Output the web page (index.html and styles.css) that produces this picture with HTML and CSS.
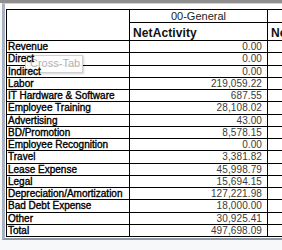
FILE: index.html
```html
<!DOCTYPE html>
<html>
<head>
<meta charset="utf-8">
<link rel="stylesheet" href="styles.css">
</head>
<body>
<div class="frame">
  <div class="inner">
    <div class="sheet">
      <div class="cell corner"></div>
      <div class="cell group">00-General</div>
      <div class="cell group"></div>
      <div class="cell measure">NetActivity</div>
      <div class="cell measure">NetActivity</div>

      <div class="cell label"><span>Revenue</span></div><div class="cell num">0.00</div><div class="cell"></div>
      <div class="cell label"><span>Direct</span></div><div class="cell num">0.00</div><div class="cell"></div>
      <div class="cell label"><span>Indirect</span></div><div class="cell num">0.00</div><div class="cell"></div>
      <div class="cell label"><span>Labor</span></div><div class="cell num">219,059.22</div><div class="cell"></div>
      <div class="cell label"><span>IT Hardware &amp; Software</span></div><div class="cell num">687.55</div><div class="cell"></div>
      <div class="cell label"><span>Employee Training</span></div><div class="cell num">28,108.02</div><div class="cell"></div>
      <div class="cell label"><span>Advertising</span></div><div class="cell num">43.00</div><div class="cell"></div>
      <div class="cell label"><span>BD/Promotion</span></div><div class="cell num">8,578.15</div><div class="cell"></div>
      <div class="cell label"><span>Employee Recognition</span></div><div class="cell num">0.00</div><div class="cell"></div>
      <div class="cell label"><span>Travel</span></div><div class="cell num">3,381.82</div><div class="cell"></div>
      <div class="cell label"><span>Lease Expense</span></div><div class="cell num">45,998.79</div><div class="cell"></div>
      <div class="cell label"><span>Legal</span></div><div class="cell num">15,694.15</div><div class="cell"></div>
      <div class="cell label"><span>Depreciation/Amortization</span></div><div class="cell num">127,221.98</div><div class="cell"></div>
      <div class="cell label"><span>Bad Debt Expense</span></div><div class="cell num">18,000.00</div><div class="cell"></div>
      <div class="cell label"><span>Other</span></div><div class="cell num">30,925.41</div><div class="cell"></div>
      <div class="cell label"><span>Total</span></div><div class="cell num">497,698.09</div><div class="cell"></div>
    </div>
  </div>
  <div class="tooltip">Cross-Tab</div>
</div>
</body>
</html>
```
FILE: styles.css
```css
html, body {
  margin: 0;
  padding: 0;
  background: #ffffff;
  overflow: hidden;
}

.frame {
  position: relative;
  width: 282px;
  height: 250px;
  overflow: hidden;
  border-top: 3px solid #8f8f8f;
  box-sizing: border-box;
  background: #f7f8fa;
}

.inner {
  margin-left: 2px;
  border-top: 1px solid #d2d2d2;
  border-left: 3px solid #a9b2c1;
  border-bottom: 2px solid #8d97a8;
  padding: 5px 0 1px 1px;
  background: #ffffff;
  overflow: hidden;
}

.sheet {
  display: grid;
  grid-template-columns: 123px 138px 120px;
  grid-template-rows: 13px 18px repeat(16, 12.25px);
  border-left: 1px solid #000;
  border-top: 1px solid #000;
  width: max-content;
  font-family: "Liberation Sans", Arial, sans-serif;
}

.cell {
  box-sizing: border-box;
  border-right: 1px solid #000;
  border-bottom: 1px solid #000;
  white-space: nowrap;
  overflow: hidden;
}

.corner {
  grid-row: 1 / span 2;
}

.group {
  font-size: 11px;
  line-height: 11px;
  padding-top: 1px;
  text-align: center;
  color: #222;
}

.measure {
  font-size: 12px;
  font-weight: bold;
  line-height: 14px;
  padding: 3px 0 0 3px;
  letter-spacing: 0.1px;
  color: #111;
}

.label {
  font-size: 10px;
  line-height: 10.25px;
  padding: 1px 0 0 1px;
  color: #000;
  -webkit-text-stroke: 0.35px #000;
}

.label span {
  position: relative;
  z-index: 2;
}

.num {
  font-size: 10px;
  line-height: 10.25px;
  padding: 1px 5px 0 0;
  text-align: right;
  letter-spacing: 0.1px;
  color: #3a3a3a;
}

.tooltip {
  position: absolute;
  left: 25px;
  top: 52px;
  width: 58px;
  height: 18px;
  box-sizing: border-box;
  z-index: 1;
  background: rgba(255, 255, 255, 0.94);
  border: 1px solid #cfcfcf;
  box-shadow: 1px 1px 2px rgba(0, 0, 0, 0.18);
  font-family: "Liberation Sans", Arial, sans-serif;
  font-size: 11px;
  line-height: 15px;
  padding-left: 4px;
  color: #b3b3b3;
}
```
